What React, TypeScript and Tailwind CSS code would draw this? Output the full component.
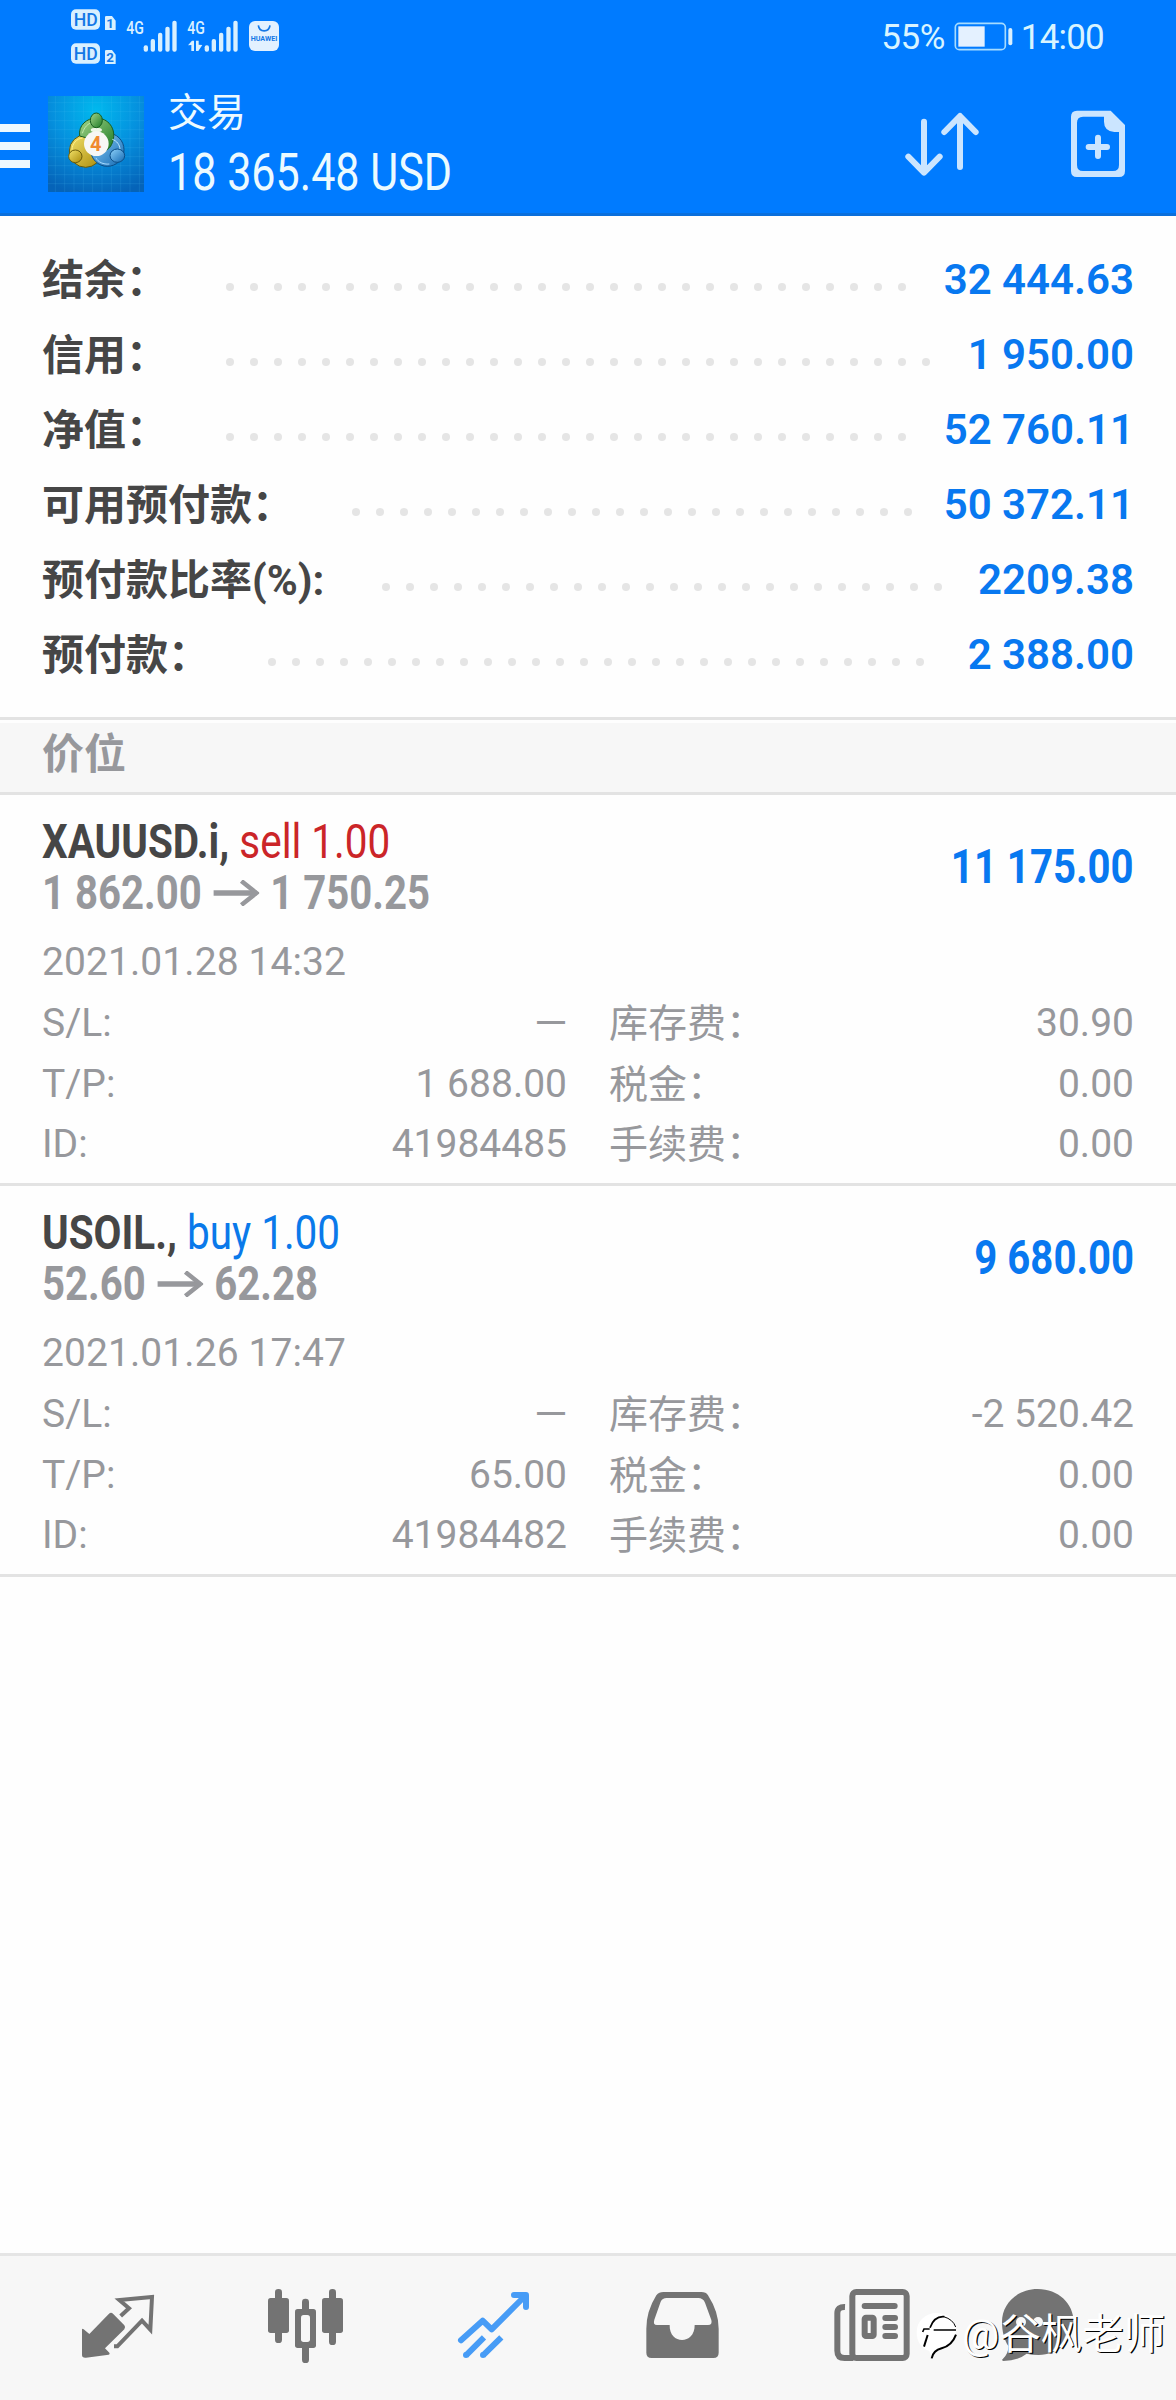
import React from 'react';

const LATIN = "font-['Roboto','Noto_Sans_CJK_SC',sans-serif]";

const account = [
  { label: '结余：', value: '32 444.63' },
  { label: '信用：', value: '1 950.00' },
  { label: '净值：', value: '52 760.11' },
  { label: '可用预付款：', value: '50 372.11' },
  { label: '预付款比率(%):', value: '2209.38' },
  { label: '预付款：', value: '2 388.00' },
];

interface Position {
  symbol: string;
  side: 'sell' | 'buy';
  volume: string;
  open: string;
  current: string;
  time: string;
  profit: string;
  left: [string, string][];
  right: [string, string][];
}

const positions: Position[] = [
  {
    symbol: 'XAUUSD.i',
    side: 'sell',
    volume: '1.00',
    open: '1 862.00',
    current: '1 750.25',
    time: '2021.01.28 14:32',
    profit: '11 175.00',
    left: [['S/L:', '—'], ['T/P:', '1 688.00'], ['ID:', '41984485']],
    right: [['库存费：', '30.90'], ['税金：', '0.00'], ['手续费：', '0.00']],
  },
  {
    symbol: 'USOIL.',
    side: 'buy',
    volume: '1.00',
    open: '52.60',
    current: '62.28',
    time: '2021.01.26 17:47',
    profit: '9 680.00',
    left: [['S/L:', '—'], ['T/P:', '65.00'], ['ID:', '41984482']],
    right: [['库存费：', '-2 520.42'], ['税金：', '0.00'], ['手续费：', '0.00']],
  },
];

function StatusIcons() {
  return (
    <svg width="300" height="72" viewBox="0 0 900 216" fill="#d9f0ff" fontFamily="Roboto, sans-serif">
      {/* HD voice badges, one per SIM */}
      {[{ y: 28, n: '1' }, { y: 130, n: '2' }].map(({ y, n }) => (
        <g key={n}>
          <rect x="213" y={y} width="87" height="61" rx="15" />
          <text x="257" y={y + 51} fontSize="56" fontWeight="500" fill="#1478e6" textAnchor="middle" textLength="72" lengthAdjust="spacingAndGlyphs">HD</text>
          <path d={`M315 ${y + 23}q0 -3 4 -3h17l11 14v28h-32z`} />
          <text x="330" y={y + 57} fontSize="40" fontWeight="700" fill="#1478e6" textAnchor="middle">{n}</text>
        </g>
      ))}
      {[{ x: 379 }, { x: 562 }].map(({ x }) => (
        <g key={x}>
          <text x={x} y="103" fontSize="56" fontWeight="500" textLength="53" lengthAdjust="spacingAndGlyphs">4G</text>
          <rect x={x + 52} y="136" width="13" height="19" rx="6" />
          <rect x={x + 73} y="117" width="13" height="38" rx="6" />
          <rect x={x + 95} y="98" width="13" height="57" rx="6" />
          <rect x={x + 117} y="80" width="13" height="75" rx="6" />
          <rect x={x + 138} y="62" width="13" height="93" rx="6" />
        </g>
      ))}
      <path d="M564 136l12 -14h6v31h-8v-18zM588 122h8v12l11 1l-12 18h-7z" />
      <rect x="747" y="63" width="90" height="90" rx="18" fill="#e2f1ff" />
      <path d="M775 76c3 22 32 22 35 0" fill="none" stroke="#1478e6" strokeWidth="5" />
      <text x="792" y="122" fontSize="20" fontWeight="700" fill="#1478e6" textAnchor="middle" textLength="80" lengthAdjust="spacingAndGlyphs">HUAWEI</text>
    </svg>
  );
}

function AppLogo() {
  return (
    <svg width="96" height="96" viewBox="144 288 288 288">
      <defs>
        <radialGradient id="sky" cx="50%" cy="15%" r="90%">
          <stop offset="0" stopColor="#00b9ee" />
          <stop offset="0.5" stopColor="#0590de" />
          <stop offset="1" stopColor="#0563b8" />
        </radialGradient>
        <linearGradient id="green" x1="0" y1="0" x2="1" y2="1">
          <stop offset="0" stopColor="#a5d68a" />
          <stop offset="1" stopColor="#1b7a25" />
        </linearGradient>
        <linearGradient id="gold" x1="0" y1="0" x2="1" y2="1">
          <stop offset="0" stopColor="#f3e36b" />
          <stop offset="1" stopColor="#a98a0a" />
        </linearGradient>
        <linearGradient id="azure" x1="0" y1="0" x2="1" y2="1">
          <stop offset="0" stopColor="#8fd2fa" />
          <stop offset="1" stopColor="#1369b3" />
        </linearGradient>
      </defs>
      <rect x="144" y="288" width="288" height="288" fill="url(#sky)" />
      <g stroke="#5cc8f5" strokeOpacity="0.22" strokeWidth="2">
        {[166, 194, 222, 250, 278, 306, 334, 362, 390, 418].map((x) => <path key={x} d={`M${x} 288v288`} />)}
        {[308, 335, 362, 389, 416, 443, 470, 497, 524, 551].map((y) => <path key={y} d={`M144 ${y}h288`} />)}
      </g>
      <g strokeWidth="3">
        <circle cx="257" cy="453" r="49" fill="url(#gold)" stroke="#5f5a10" />
        <circle cx="322" cy="449" r="50" fill="url(#azure)" stroke="#0b4d86" />
        <path d="M239 408c-5 -32 22 -54 50 -54c36 0 60 32 50 68c-5 18 -14 26 -22 30l-26 -30z" fill="url(#green)" stroke="#175d20" />
        <path d="M247 400c8 -26 24 -34 42 -34" stroke="#c3e8ae" fill="none" />
        <path d="M216 449c1 -17 12 -33 32 -35" stroke="#fff08a" fill="none" />
        <path d="M337 418c14 5 22 16 23 30" stroke="#bfe8ff" fill="none" />
        <path d="M288 474c6 12 22 20 40 18" stroke="#a9dcff" fill="none" />
        <ellipse cx="289" cy="390" rx="17" ry="7" fill="#edf7e7" stroke="none" />
        <ellipse cx="289" cy="361" rx="18" ry="22" fill="url(#green)" stroke="#175d20" />
        <ellipse cx="226" cy="469" rx="20" ry="19" fill="url(#gold)" stroke="#6b5c0a" />
        <ellipse cx="352" cy="467" rx="22" ry="20" fill="url(#azure)" stroke="#0b4d86" />
      </g>
      <circle cx="289" cy="431" r="37" fill="#f7f7f5" />
      <text x="287" y="452" fontSize="60" fontWeight="700" fontFamily="Roboto, sans-serif" fill="#f08a30" textAnchor="middle">4</text>
    </svg>
  );
}

function Header() {
  return (
    <header className="flex h-[216px] flex-col border-b-[3px] border-[#0a6fdc] bg-[#007bff]">
      <div className="flex h-[72px] items-center justify-between pr-[72px] text-[35px] leading-none text-[#d9f4ff]">
        <StatusIcons />
        <div className="flex items-center pt-[2px]">
          <span className="tracking-[-0.5px]">55%</span>
          <svg width="60" height="30" viewBox="400 66 180 90" className="mr-[7px] ml-[9px]">
            <rect x="404" y="70" width="150" height="79" rx="12" fill="none" stroke="#a6dcff" strokeWidth="5" />
            <rect x="413" y="79" width="79" height="61" fill="#e4f1ff" />
            <rect x="563" y="84" width="12" height="52" rx="6" fill="#d9f0ff" />
          </svg>
          <span className="tracking-[-0.8px]">14:00</span>
        </div>
      </div>
      <div className="flex flex-1 items-center pt-[3px]">
        <div className="mt-[3px] flex w-[30px] flex-col gap-[10px]">
          <div className="h-2 bg-[#eef8ff]" />
          <div className="h-2 bg-[#eef8ff]" />
          <div className="h-2 bg-[#eef8ff]" />
        </div>
        <div className="ml-[18px]"><AppLogo /></div>
        <div className="ml-[24px] flex flex-1 flex-col pt-[7px] text-[#ecfaff]">
          <span className="text-[39px] leading-[50px]">交易</span>
          <span className="origin-left scale-x-[0.845] text-[51px] leading-[70px] whitespace-nowrap">18 365.48 USD</span>
        </div>
        <svg width="76" height="70" viewBox="252 330 228 210" className="mt-[3px]" fill="none" stroke="#cbe5ff" strokeWidth="18" strokeLinecap="round" strokeLinejoin="round">
          <path d="M312 362v150M265 467l47 48l47 -48M420 350v148M373 393l47 -48l47 48" />
        </svg>
        <svg width="56" height="68" viewBox="750 330 168 204" className="mr-[50px] ml-[90px]">
          <path fill="#cbe5ff" fillRule="evenodd" d="M771 332h101l43 43v138q0 18 -18 18h-126q-18 0 -18 -18v-163q0 -18 18 -18zM789 350q-18 0 -18 18v127q0 18 18 18h90q18 0 18 -18v-99h-14q-31 -3 -31 -31v-15z" />
          <path d="M834 413v55M806 441h55" stroke="#cbe5ff" strokeWidth="18" strokeLinecap="round" />
        </svg>
      </div>
    </header>
  );
}

function Leader() {
  return (
    <div className="mt-[15px] mr-[21px] ml-[50px] flex h-2 flex-1 flex-wrap overflow-hidden">
      {Array.from({ length: 32 }, (_, i) => (
        <span key={i} className="flex h-2 w-6 justify-center">
          <i className="size-2 rounded-full bg-[#e5e5e5]" />
        </span>
      ))}
    </div>
  );
}

function PositionCard({ position }: { position: Position }) {
  const color = position.side === 'sell' ? 'text-[#cb2528]' : 'text-[#0a79ea]';
  return (
    <article className="h-[391px] border-b-[3px] border-[#e3e3e3] px-[42px] pt-[21px] text-[39px] text-[#97989c]">
      <div className="flex h-[102px] items-center justify-between text-[48px] font-bold whitespace-nowrap">
        <div className="leading-[51px]">
          <div className="origin-left scale-x-[0.843] text-[#464646]">
            {position.symbol}, <span className={`font-normal ${color}`}>{position.side} {position.volume}</span>
          </div>
          <div className="flex origin-left scale-x-[0.836] items-center">
            {position.open}
            <svg width="55" height="26" viewBox="0 0 46 26" preserveAspectRatio="none" fill="none" stroke="currentColor" strokeWidth="5.5" className="mr-[13px] ml-[14px]">
              <path d="M0 13h43" />
              <path d="M28 1l15 12l-15 12" strokeWidth="4.5" />
            </svg>
            {position.current}
          </div>
        </div>
        <span className="origin-right scale-x-[0.836] text-[#0878f0]">{position.profit}</span>
      </div>
      <div className="mt-[14px] leading-[61px] tracking-[0.08px]">{position.time}</div>
      <div className="grid grid-cols-2 gap-x-[42px]">
        {[position.left, position.right].map((column, i) => (
          <dl key={i}>
            {column.map(([label, value]) => (
              <div key={label} className="flex h-[60.5px] items-center justify-between">
                <dt className={i === 1 ? 'pt-[2px]' : ''}>{label}</dt>
                <dd className={value === '—' ? 'origin-right scale-x-[1.1]' : ''}>{value}</dd>
              </div>
            ))}
          </dl>
        ))}
      </div>
    </article>
  );
}

function TabBar() {
  return (
    <nav className="relative flex h-[147px] border-t-[3px] border-[#e5e5e5] bg-[#f7f7f7] pl-[22px] text-[#737373]">
      {/* Quotes */}
      <svg width="189" height="144" viewBox="66 78 567 432" fill="currentColor">
        <path d="M246 299q0 -5 5 -1l17 14l59 -61q6 -5 12 0l34 35q5 6 0 12l-58 57l13 13q3 5 -2 6l-68 9q-12 1 -12 -8z" />
        <path d="M362 258l25 -23l-29 -25l98 -9l-5 98l-25 -27l-74 77h-10" fill="none" stroke="currentColor" strokeWidth="12" />
      </svg>
      {/* Charts */}
      <svg width="189" height="144" viewBox="633 78 567 432" fill="currentColor">
        <rect x="825" y="177" width="21" height="162" rx="10" />
        <rect x="804" y="204" width="63" height="105" rx="8" />
        <rect x="987" y="177" width="21" height="168" rx="10" />
        <rect x="966" y="204" width="63" height="105" rx="8" />
        <rect x="906" y="206" width="21" height="193" rx="10" />
        <rect x="885" y="237" width="63" height="117" rx="8" />
        <rect x="903" y="255" width="27" height="81" rx="8" fill="#f7f7f7" />
      </svg>
      {/* Trade */}
      <svg width="189" height="144" viewBox="0 78 567 432" fill="none" stroke="#479cf6" strokeWidth="18" strokeLinejoin="round">
        <path d="M183 331l65 -59l27 26l100 -100M342 195h36v36" strokeLinecap="round" />
        <path d="M252 322l-54 54M304 322l-55 54" />
        <circle cx="198" cy="375" r="9" fill="#479cf6" stroke="none" />
        <circle cx="249" cy="375" r="9" fill="#479cf6" stroke="none" />
      </svg>
      {/* History */}
      <svg width="189" height="144" viewBox="567 78 567 432" fill="currentColor">
        <path fillRule="evenodd" d="M790 186h114q14 0 20 10q32 50 32 100v72q0 16 -16 16h-185q-16 0 -16 -16v-72q0 -52 30 -100q8 -10 21 -10zM800 204q-13 0 -18 11l-19 54q-5 16 8 16h38c-2 60 76 60 75 0h40q14 0 10 -15l-19 -52q-6 -14 -20 -14z" />
      </svg>
      {/* News */}
      <svg width="189" height="144" viewBox="6 78 567 432" fill="none" stroke="currentColor" strokeWidth="18">
        <rect x="229" y="186" width="163" height="198" rx="12" />
        <path d="M207 231q-23 -1 -23 19v112q0 22 22 22h26" />
        <path d="M266 228h90M328 264h29M328 291h29M328 318h29" strokeLinecap="round" />
        <rect x="266" y="263" width="27" height="55" rx="4" />
      </svg>
      {/* Messages */}
      <svg width="189" height="144" viewBox="573 78 567 432" fill="currentColor">
        <path d="M785 177c62 0 108 44 108 99c0 57 -48 99 -105 99q-20 0 -36 -4q-26 21 -70 22q-7 -2 -1 -7q17 -15 16 -38c-12 -18 -19 -43 -19 -72c0 -55 46 -99 107 -99z" />
        <circle cx="735" cy="276" r="15" fill="#f7f7f7" />
        <circle cx="786" cy="276" r="15" fill="#f7f7f7" />
      </svg>

      <div className="absolute top-[52px] left-[916px] flex items-center whitespace-nowrap">
        <svg width="46" height="50" viewBox="420 247 138 150">
          <path d="M482 256c38 0 58 26 58 56c0 36 -26 50 -50 54q-18 6 -23 26l-7 -22c-26 -8 -38 -30 -38 -56c0 -34 26 -58 60 -58z" fill="#fff" />
          <g fill="none" stroke="#000">
            <path d="M462 300Q475 264 505 267" strokeWidth="5" />
            <path d="M503 267Q531 275 539 298" strokeWidth="3" />
            <path d="M440 313l4 -9h17M473 307h67" strokeWidth="5" />
            <path d="M444 357l11 -35" strokeWidth="6" />
            <path d="M540 321Q528 354 497 362Q472 368 467 392" strokeWidth="6" />
          </g>
        </svg>
        <span className="text-[41.5px] leading-[54px] text-white [text-shadow:1.2px_1.2px_0_#000]">@谷枫老师</span>
      </div>
    </nav>
  );
}

export default function App() {
  return (
    <div className={`flex h-[2400px] w-[1176px] flex-col overflow-hidden bg-[#fefefe] ${LATIN}`}>
      <Header />
      <section className="h-[504px] border-b-[3px] border-[#e3e3e3] px-[42px] pt-[26px] text-[42px]">
        {account.map((row) => (
          <div key={row.label} className="flex h-[75px] items-center whitespace-nowrap">
            <span className="pt-[2px] font-bold text-[#464646]">{row.label}</span>
            <Leader />
            <span className="font-semibold text-[#0878f0]">{row.value}</span>
          </div>
        ))}
      </section>
      <h2 className="mt-[3px] flex h-[72px] items-center border-b-[3px] border-[#e3e3e3] bg-[#f7f7f7] px-[42px] pb-[7px] text-[42px] font-bold text-[#97989c]">
        价位
      </h2>
      <main className="flex-1">
        {positions.map((p) => <PositionCard key={p.symbol} position={p} />)}
      </main>
      <TabBar />
    </div>
  );
}
